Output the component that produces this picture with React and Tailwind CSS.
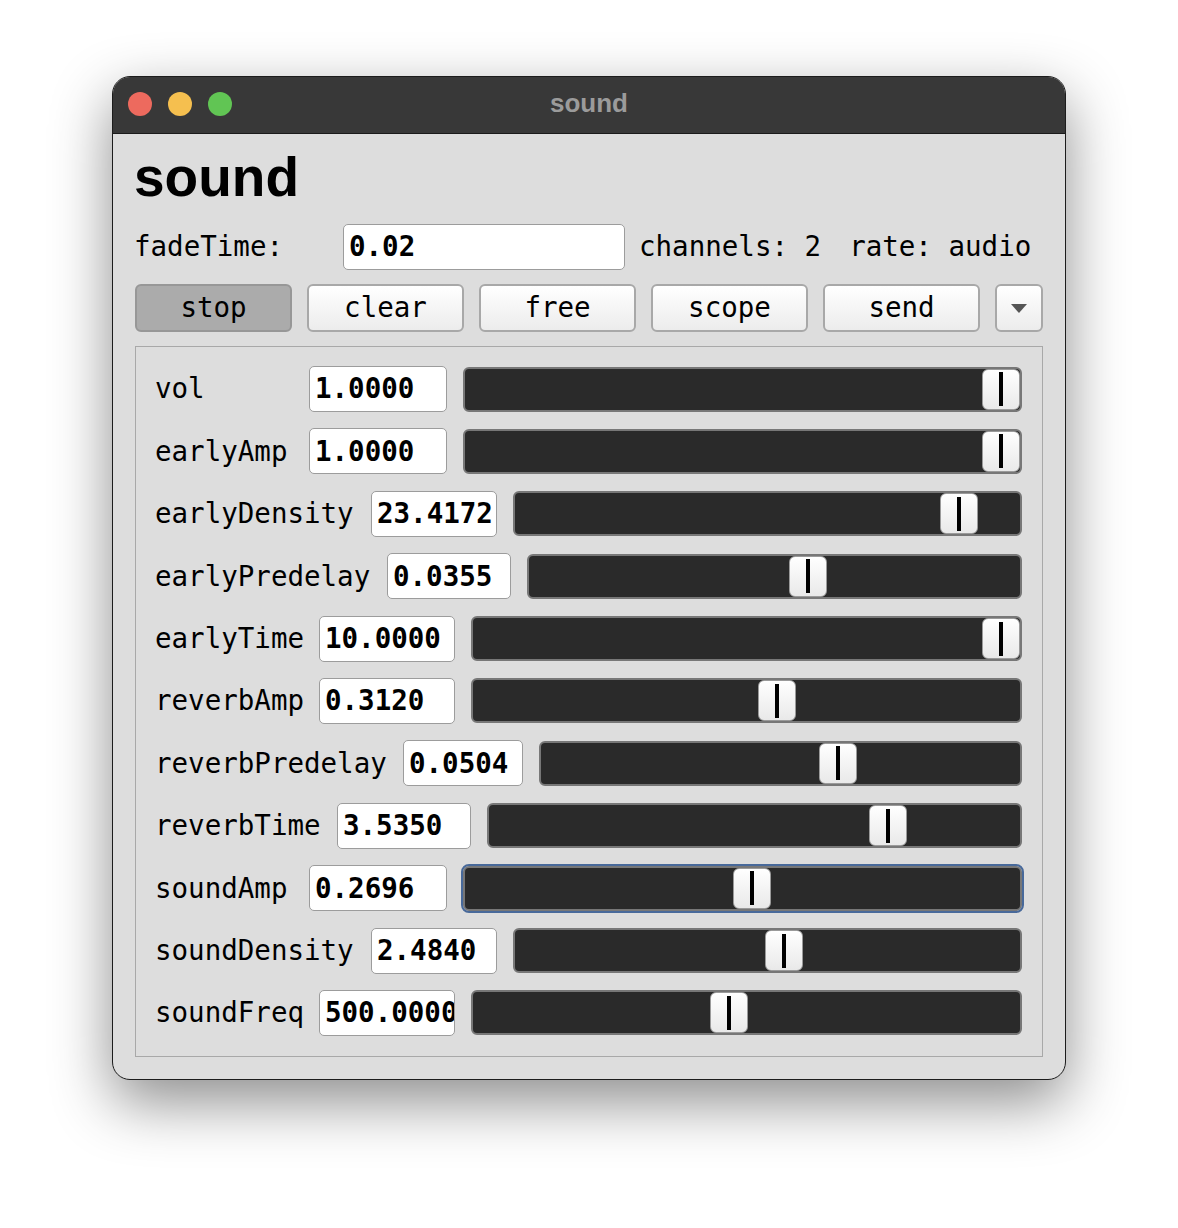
import React from 'react';

const rows = [
  { name: 'vol', value: '1.0000', lw: 'w-[154px]', bw: 'w-[138px]', pos: 1 },
  { name: 'earlyAmp', value: '1.0000', lw: 'w-[154px]', bw: 'w-[138px]', pos: 1 },
  { name: 'earlyDensity', value: '23.4172', lw: 'w-[216px]', bw: 'w-[126px]', pos: 0.911 },
  { name: 'earlyPredelay', value: '0.0355', lw: 'w-[232px]', bw: 'w-[124px]', pos: 0.575 },
  { name: 'earlyTime', value: '10.0000', lw: 'w-[164px]', bw: 'w-[136px]', pos: 1 },
  { name: 'reverbAmp', value: '0.3120', lw: 'w-[164px]', bw: 'w-[136px]', pos: 0.559 },
  { name: 'reverbPredelay', value: '0.0504', lw: 'w-[248px]', bw: 'w-[120px]', pos: 0.631 },
  { name: 'reverbTime', value: '3.5350', lw: 'w-[182px]', bw: 'w-[134px]', pos: 0.77 },
  { name: 'soundAmp', value: '0.2696', lw: 'w-[154px]', bw: 'w-[138px]', pos: 0.519, focused: true },
  { name: 'soundDensity', value: '2.4840', lw: 'w-[216px]', bw: 'w-[126px]', pos: 0.536 },
  { name: 'soundFreq', value: '500.0000', lw: 'w-[164px]', bw: 'w-[136px]', pos: 0.465 },
];

const buttons = ['stop', 'clear', 'free', 'scope', 'send'];

const Slider = ({ pos, focused }) => (
  <div
    className={
      'relative flex-1 h-[45px] bg-[#2a2a2a] border-2 border-[#777777] rounded-[6px] ' +
      (focused ? 'outline-2 outline-[#48699a]' : '')
    }
  >
    {/* knob */}
    <div
      className="absolute top-0 bottom-0 w-[38px] flex items-center justify-center rounded-[6px] border-[1.5px] border-[#9a9a9a] bg-gradient-to-b from-white to-[#e9e9e9]"
      style={{ left: `calc((100% - 38px) * ${pos})` }}
    >
      <div className="w-[4px] h-[34px] bg-black"></div>
    </div>
  </div>
);

const App = () => {
  return (
    <div className="min-h-screen bg-white pt-[76px] pl-[112px] font-['DejaVu_Sans_Mono',monospace] text-black">
      <div className="w-[954px] h-[1004px] rounded-[18px] overflow-hidden border border-[#1c1c1c] bg-[#dddddd] shadow-[0_22px_60px_rgba(0,0,0,0.45)] flex flex-col">

        {/* Title bar */}
        <div className="relative h-[57px] bg-[#383838] border-b border-[#1a1a1a] flex items-center justify-center shrink-0">
          <div className="absolute left-[15px] top-[15px] flex gap-[16px]">
            <span className="w-[24px] h-[24px] rounded-full bg-[#ed6a5e]"></span>
            <span className="w-[24px] h-[24px] rounded-full bg-[#f5bf4f]"></span>
            <span className="w-[24px] h-[24px] rounded-full bg-[#61c554]"></span>
          </div>
          <span className="-mt-[3px] font-['Liberation_Sans',Arial,sans-serif] font-bold text-[26px] text-[#9b9b9b]">sound</span>
        </div>

        <div className="flex flex-col px-[22px]">
          {/* Heading */}
          <h1 className="mt-[16px] h-[54px] leading-[54px] font-['Liberation_Sans',Arial,sans-serif] font-bold text-[55px] -ml-[1px]">
            sound
          </h1>

          {/* fadeTime row */}
          <div className="mt-[20px] h-[46px] flex items-center text-[27.5px]">
            <span className="w-[208px] -ml-[1px] pl-0">fadeTime:</span>
            <div className="w-[282px] ml-[1px] h-[46px] bg-white border-[1.5px] border-[#9c9c9c] rounded-[5px] flex items-center pl-[5px] font-bold">
              0.02
            </div>
            <div className="ml-[14px] flex gap-[28px]">
              <span>channels: 2</span>
              <span>rate: audio</span>
            </div>
          </div>

          {/* Buttons */}
          <div className="mt-[14px] h-[48px] flex gap-[15px] text-[27.5px]">
            {buttons.map((b, i) => (
              <div
                key={b}
                className={
                  'w-[157px] h-[48px] rounded-[6px] border-2 flex items-center justify-center ' +
                  (i === 0
                    ? 'bg-[#ababab] border-[#979797]'
                    : 'bg-gradient-to-b from-white to-[#ececec] border-[#a8a8a8]')
                }
              >
                {b}
              </div>
            ))}
            <div className="w-[48px] h-[48px] rounded-[6px] border-2 border-[#a8a8a8] bg-gradient-to-b from-white to-[#ececec] flex items-center justify-center">
              <svg width="16" height="9" viewBox="0 0 16 9">
                <path d="M0 0 L16 0 L8 9 Z" fill="#555555" />
              </svg>
            </div>
          </div>

          {/* Params panel */}
          <div className="mt-[14px] h-[711px] border border-[#a8a8a8] pt-[19px] pl-[19px] pr-[20px] flex flex-col gap-[16.4px] text-[27.5px]">
            {rows.map((r) => (
              <div key={r.name} className="h-[46px] flex items-center">
                <span className={r.lw + ' shrink-0 whitespace-nowrap'}>{r.name}</span>
                <div
                  className={
                    r.bw +
                    ' shrink-0 h-[46px] bg-white border-[1.5px] border-[#9c9c9c] rounded-[5px] flex items-center pl-[5px] font-bold overflow-hidden whitespace-nowrap'
                  }
                >
                  {r.value}
                </div>
                <div className="w-[16px] shrink-0"></div>
                <Slider pos={r.pos} focused={r.focused} />
              </div>
            ))}
          </div>
        </div>
      </div>
    </div>
  );
};

export default App;
